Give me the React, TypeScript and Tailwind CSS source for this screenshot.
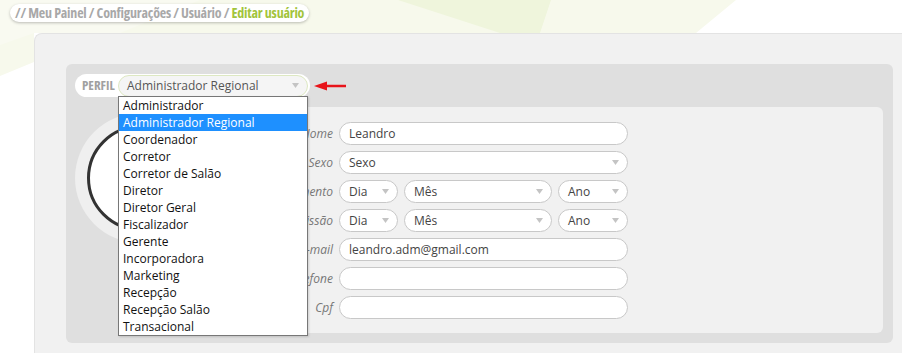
import React from 'react';

const perfis = [
  'Administrador',
  'Administrador Regional',
  'Coordenador',
  'Corretor',
  'Corretor de Salão',
  'Diretor',
  'Diretor Geral',
  'Fiscalizador',
  'Gerente',
  'Incorporadora',
  'Marketing',
  'Recepção',
  'Recepção Salão',
  'Transacional',
];

const Caret = () => (
  <svg width="7" height="5" viewBox="0 0 7 5" className="shrink-0">
    <path d="M0 0 L7 0 L3.5 5 Z" fill="#c4c4c4" />
  </svg>
);

const FakeSelect = ({ value, className }: { value: string; className: string }) => (
  <div
    className={`h-[23px] rounded-full border border-[#c8c8c8] bg-white flex items-center justify-between pl-[9px] pr-[8px] text-[12px] text-[#444] ${className}`}
  >
    <span>{value}</span>
    <Caret />
  </div>
);

const Input = ({ value }: { value?: string }) => (
  <div className="h-[23px] w-[289px] rounded-full border border-[#c8c8c8] bg-white flex items-center pl-[9px] text-[12px] text-[#444]">
    {value}
  </div>
);

const Row = ({ label, children }: { label: string; children: React.ReactNode }) => (
  <div className="flex items-center gap-[6px] h-[23px]">
    <span className="w-[110px] text-right italic text-[12px] text-[#777]">{label}</span>
    {children}
  </div>
);

const DateRow = ({ label }: { label: string }) => (
  <Row label={label}>
    <div className="flex gap-[6px]">
      <FakeSelect value="Dia" className="w-[59px]" />
      <FakeSelect value="Mês" className="w-[148px]" />
      <FakeSelect value="Ano" className="w-[70px]" />
    </div>
  </Row>
);

const Background = () => (
  <svg className="absolute inset-0" width="902" height="353" viewBox="0 0 902 353">
    <path d="M0 0 L736 0 L696 33 L34 33 L34 62 L0 76 Z" fill="#f7f9ec" />
    <path d="M398 0 L551 0 L540 33 L500 33 Z" fill="#eff5dc" />
    <path d="M0 0 L200 0 L120 33 L34 33 L0 45 Z" fill="#f9faf1" />
  </svg>
);

const condensed = { fontFamily: '"Open Sans", "DejaVu Sans Condensed", sans-serif', fontStretch: '75%' };

export default function App() {
  return (
    <div
      className="relative w-[902px] h-[353px] overflow-hidden bg-white"
      style={{ fontFamily: '"Open Sans", "Liberation Sans", sans-serif' }}
    >
      <Background />

      <div className="relative pt-[4px] pl-[10px] flex">
        <div
          className="flex items-center h-[18px] px-[5px] rounded-full bg-white shadow-[0_1px_3px_rgba(0,0,0,0.25)] text-[14px] leading-none font-bold tracking-[-0.2px]"
          style={condensed}
        >
          <span className="text-[#a8a8a8] whitespace-pre">// Meu Painel / Configurações / Usuário / </span>
          <span className="text-[#a2c43c]">Editar usuário</span>
        </div>
      </div>

      <div className="relative mt-[11px] ml-[34px] h-[400px] bg-[#f1f1f1] rounded-tl-[8px] border-t border-l border-[#e3e3e3] pt-[30px] pl-[31px] pr-[9px]">
        <div className="h-[279px] rounded-[6px] bg-[#dfdfdf] pt-[10px] pl-[9px] pr-[10px]">
          <div className="flex items-center">
            <div className="relative flex items-center h-[23px] w-[235px] rounded-full bg-white pl-[7px] pr-[2px]">
              <span className="w-[36px] text-[13px] font-bold text-[#a0a0a0]" style={condensed}>
                PERFIL
              </span>
              <div className="flex-1 h-[22px] rounded-full border border-[#dde8c2] bg-[#f5f5f5] flex items-center justify-between pl-[8px] pr-[8px] text-[12px] text-[#555]">
                <span>Administrador Regional</span>
                <Caret />
              </div>

              <div className="absolute left-[43px] top-[22px] w-[190px] z-10 border border-[#777] bg-white shadow-[1px_1px_2px_rgba(0,0,0,0.15)]">
                {perfis.map((p) => (
                  <div
                    key={p}
                    className={`h-[17px] leading-[17px] pl-[4px] text-[12px] ${
                      p === 'Administrador Regional' ? 'bg-[#1e90ff] text-white' : 'text-[#111]'
                    }`}
                  >
                    {p}
                  </div>
                ))}
              </div>
            </div>
            <svg width="32" height="10" viewBox="0 0 32 10" className="ml-[4px] mt-[1px]">
              <path d="M10 5 L32 5" stroke="#e8141a" strokeWidth="2.5" />
              <path d="M0 5 L13 0.5 L13 9.5 Z" fill="#e8141a" />
            </svg>
          </div>

          <div className="flex mt-[10px]">
            <div className="shrink-0 w-[130px] h-[130px] mt-[6px] rounded-full bg-[#efefef] flex items-center justify-center">
              <div className="w-[106px] h-[106px] rounded-full border-[3px] border-[#333] bg-white" />
            </div>
            <div className="ml-[8px] flex-1 h-[226px] rounded-[6px] bg-[#f1f1f1] pt-[15px] pl-[10px] flex flex-col gap-[6px]">
              <Row label="Nome">
                <Input value="Leandro" />
              </Row>
              <Row label="Sexo">
                <FakeSelect value="Sexo" className="w-[289px]" />
              </Row>
              <DateRow label="Nascimento" />
              <DateRow label="Emissão" />
              <Row label="E-mail">
                <Input value="leandro.adm@gmail.com" />
              </Row>
              <Row label="Telefone">
                <Input />
              </Row>
              <Row label="Cpf">
                <Input />
              </Row>
            </div>
          </div>
        </div>
      </div>
    </div>
  );
}
